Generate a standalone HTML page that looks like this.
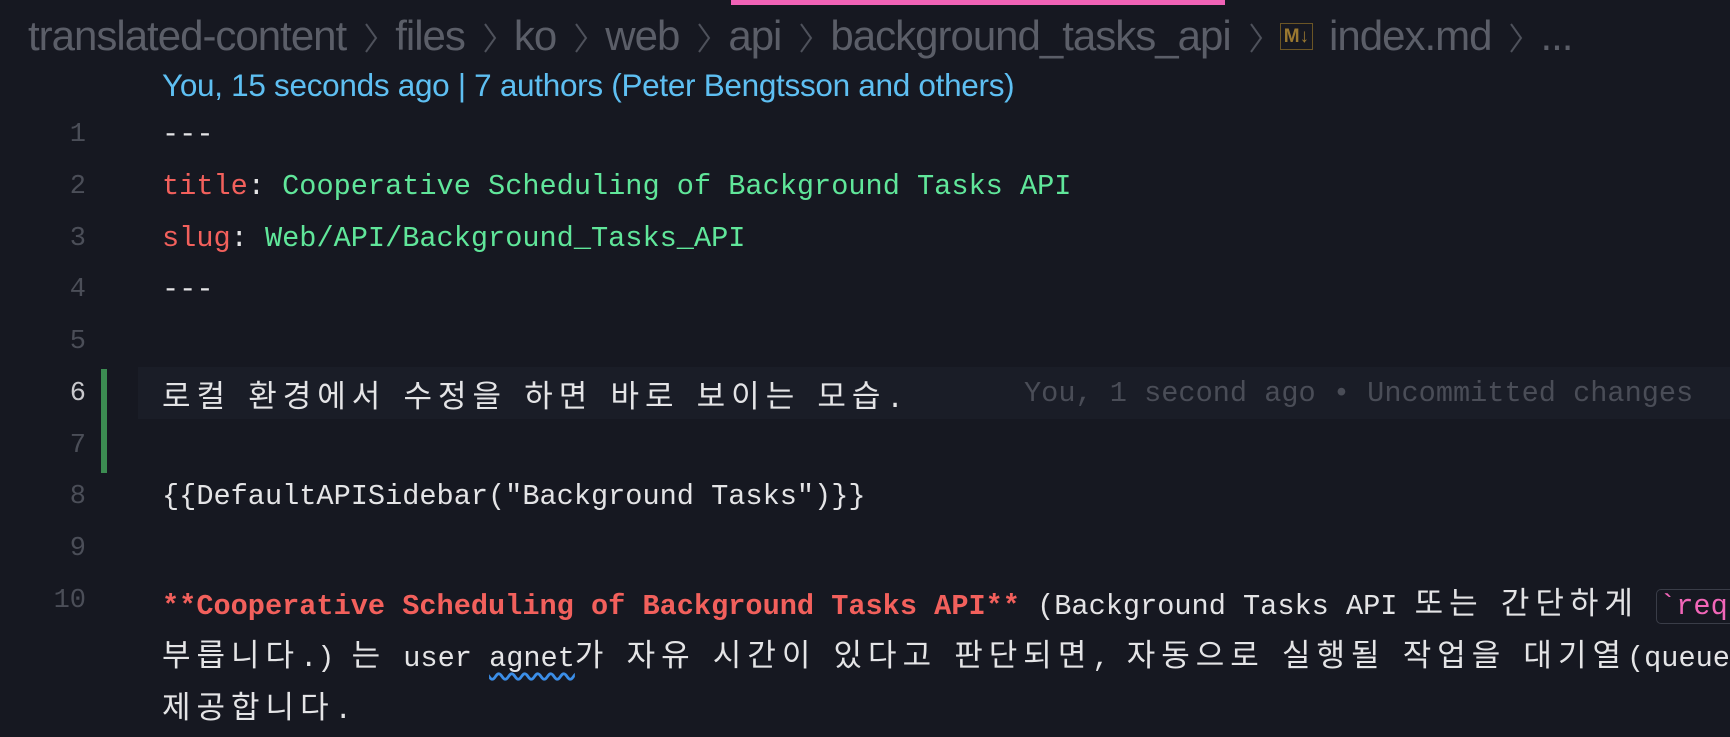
<!DOCTYPE html>
<html><head><meta charset="utf-8"><style>
html,body{margin:0;padding:0}
body{width:1730px;height:694px;overflow:hidden;background:#161821;position:relative;font-family:"Liberation Mono","Noto Sans CJK KR",monospace;}
.bc{position:absolute;left:28px;top:12px;font-family:"Liberation Sans",sans-serif;font-size:42px;color:#5b5e68;white-space:nowrap;letter-spacing:-1px}
.bc svg{margin:0 17px 0 18px;vertical-align:-5px}
.md{display:inline-block;border:1.5px solid #6b5525;color:#9a7830;font-size:19px;font-weight:bold;padding:0 3px;vertical-align:8px;margin-right:16px;line-height:25px;letter-spacing:0}
.pink{position:absolute;left:731px;top:0;width:494px;height:5px;background:#f062b6}
.blame{position:absolute;left:162px;top:67px;font-family:"Liberation Sans",sans-serif;font-size:31.5px;color:#5ebff2;white-space:nowrap;letter-spacing:-0.3px}
.hl{position:absolute;left:138px;top:367px;width:1592px;height:52px;background:#1a1d27}
.gb{position:absolute;left:101px;top:369px;width:6px;height:104px;background:#3c8c52}
.ln{position:absolute;left:0;width:86px;text-align:right;font-size:27px;color:#4b4e58;line-height:52px}
.l{position:absolute;left:162px;font-size:28.6px;line-height:52px;color:#e4e4e6;white-space:nowrap}
.k{font-family:"Noto Sans CJK KR",sans-serif;font-size:31px;letter-spacing:6px}
.r{color:#f2605c}.g{color:#60e69a}.gh{color:#4a4d57}
.code{border:1.5px solid #3a3d48;border-radius:5px;color:#f266b8;padding:0 2px}
</style></head><body>
<div class="pink"></div>
<div class="bc">translated-content<svg width="14" height="34" viewBox="0 0 14 34"><path d="M2 3 L12 17 L2 31" fill="none" stroke="#4e515b" stroke-width="2"/></svg>files<svg width="14" height="34" viewBox="0 0 14 34"><path d="M2 3 L12 17 L2 31" fill="none" stroke="#4e515b" stroke-width="2"/></svg>ko<svg width="14" height="34" viewBox="0 0 14 34"><path d="M2 3 L12 17 L2 31" fill="none" stroke="#4e515b" stroke-width="2"/></svg>web<svg width="14" height="34" viewBox="0 0 14 34"><path d="M2 3 L12 17 L2 31" fill="none" stroke="#4e515b" stroke-width="2"/></svg>api<svg width="14" height="34" viewBox="0 0 14 34"><path d="M2 3 L12 17 L2 31" fill="none" stroke="#4e515b" stroke-width="2"/></svg>background_tasks_api<svg width="14" height="34" viewBox="0 0 14 34"><path d="M2 3 L12 17 L2 31" fill="none" stroke="#4e515b" stroke-width="2"/></svg><span class="md">M↓</span>index.md<svg width="14" height="34" viewBox="0 0 14 34"><path d="M2 3 L12 17 L2 31" fill="none" stroke="#4e515b" stroke-width="2"/></svg>...</div>
<div class="blame">You, 15 seconds ago | 7 authors (Peter Bengtsson and others)</div>
<div class="hl"></div><div class="gb"></div>

<div class="ln" style="top:109px">1</div>
<div class="ln" style="top:161px">2</div>
<div class="ln" style="top:213px">3</div>
<div class="ln" style="top:264px">4</div>
<div class="ln" style="top:316px">5</div>
<div class="ln" style="top:368px;color:#c8c8cc">6</div>
<div class="ln" style="top:420px">7</div>
<div class="ln" style="top:471px">8</div>
<div class="ln" style="top:523px">9</div>
<div class="ln" style="top:575px">10</div>

<div class="l" style="top:109px">---</div>
<div class="l" style="top:161px"><span class="r">title</span>: <span class="g">Cooperative Scheduling of Background Tasks API</span></div>
<div class="l" style="top:213px"><span class="r">slug</span>: <span class="g">Web/API/Background_Tasks_API</span></div>
<div class="l" style="top:264px">---</div>
<div class="l" style="top:368px"><span class="k">로컬</span> <span class="k">환경에서</span> <span class="k">수정을</span> <span class="k">하면</span> <span class="k">바로</span> <span class="k">보이는</span> <span class="k">모습</span>.</div>
<div class="l gh" style="top:368px;left:1024px">You, 1 second ago • Uncommitted changes</div>
<div class="l" style="top:471px">{{DefaultAPISidebar("Background Tasks")}}</div>
<div class="l" style="top:575px"><span class="r" style="font-weight:bold">**Cooperative Scheduling of Background Tasks API**</span> (Background Tasks API <span class="k">또는</span> <span class="k">간단하게</span> <span class="code">`requestIdleCallback()`</span></div>
<div class="l" style="top:627px"><span class="k">부릅니다</span>.) <span class="k">는</span> user <span style="text-decoration:underline wavy #3b8ee8;text-underline-offset:6px">agnet</span><span class="k">가</span> <span class="k">자유</span> <span class="k">시간이</span> <span class="k">있다고</span> <span class="k">판단되면</span>, <span class="k">자동으로</span> <span class="k">실행될</span> <span class="k">작업을</span> <span class="k">대기열</span>(queue)</div>
<div class="l" style="top:679px"><span class="k">제공합니다</span>.</div>
</body></html>
